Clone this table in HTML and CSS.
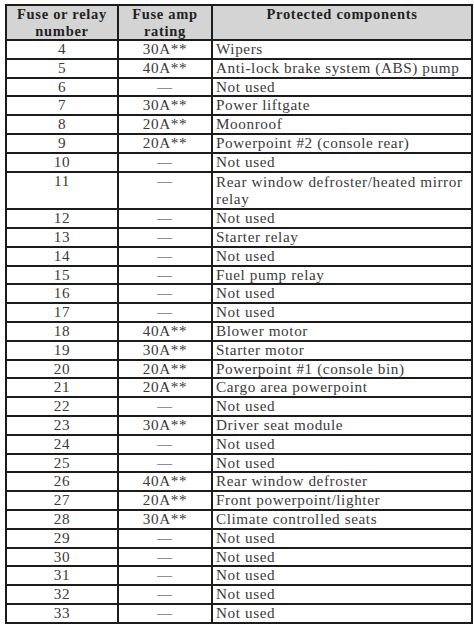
FILE: index.html
```html
<!DOCTYPE html>
<html>
<head>
<meta charset="utf-8">
<link rel="stylesheet" href="styles.css">
</head>
<body>
<table class="fuse">
<colgroup><col class="c1"><col class="c2"><col class="c3"></colgroup>
<thead>
<tr><th>Fuse or relay<br>number</th><th>Fuse amp<br>rating</th><th class="top">Protected components</th></tr>
</thead>
<tbody>
<tr><td>4</td><td>30A**</td><td>Wipers</td></tr>
<tr><td>5</td><td>40A**</td><td>Anti-lock brake system (ABS) pump</td></tr>
<tr><td>6</td><td>—</td><td>Not used</td></tr>
<tr><td>7</td><td>30A**</td><td>Power liftgate</td></tr>
<tr><td>8</td><td>20A**</td><td>Moonroof</td></tr>
<tr><td>9</td><td>20A**</td><td>Powerpoint #2 (console rear)</td></tr>
<tr><td>10</td><td>—</td><td>Not used</td></tr>
<tr class="tall"><td>11</td><td>—</td><td>Rear window defroster/heated mirror<br>relay</td></tr>
<tr><td>12</td><td>—</td><td>Not used</td></tr>
<tr><td>13</td><td>—</td><td>Starter relay</td></tr>
<tr><td>14</td><td>—</td><td>Not used</td></tr>
<tr><td>15</td><td>—</td><td>Fuel pump relay</td></tr>
<tr><td>16</td><td>—</td><td>Not used</td></tr>
<tr><td>17</td><td>—</td><td>Not used</td></tr>
<tr><td>18</td><td>40A**</td><td>Blower motor</td></tr>
<tr><td>19</td><td>30A**</td><td>Starter motor</td></tr>
<tr><td>20</td><td>20A**</td><td>Powerpoint #1 (console bin)</td></tr>
<tr><td>21</td><td>20A**</td><td>Cargo area powerpoint</td></tr>
<tr><td>22</td><td>—</td><td>Not used</td></tr>
<tr><td>23</td><td>30A**</td><td>Driver seat module</td></tr>
<tr><td>24</td><td>—</td><td>Not used</td></tr>
<tr><td>25</td><td>—</td><td>Not used</td></tr>
<tr><td>26</td><td>40A**</td><td>Rear window defroster</td></tr>
<tr><td>27</td><td>20A**</td><td>Front powerpoint/lighter</td></tr>
<tr><td>28</td><td>30A**</td><td>Climate controlled seats</td></tr>
<tr><td>29</td><td>—</td><td>Not used</td></tr>
<tr><td>30</td><td>—</td><td>Not used</td></tr>
<tr><td>31</td><td>—</td><td>Not used</td></tr>
<tr><td>32</td><td>—</td><td>Not used</td></tr>
<tr><td>33</td><td>—</td><td>Not used</td></tr>
</tbody>
</table>
</body>
</html>
```
FILE: styles.css
```css
html, body {
  margin: 0;
  padding: 0;
  background: #ffffff;
}
body {
  padding: 4px 3px 4px 5px;
}
.fuse {
  border-collapse: collapse;
  width: 466px;
  table-layout: fixed;
  font-family: "Liberation Serif", "DejaVu Serif", serif;
  font-size: 15.2px;
  letter-spacing: 0.6px;
  color: #3a3a3a;
  border: 2px solid #1c1c1c;
}
.c1 { width: 112px; }
.c2 { width: 94px; }
.c3 { width: 260px; }
.fuse th, .fuse td {
  border: 2px solid #1c1c1c;
  padding: 0;
  vertical-align: top;
}
.fuse th {
  background: #d4d4d4;
  color: #222222;
  font-weight: bold;
  font-size: 14.5px;
  letter-spacing: 0.7px;
  line-height: 16.5px;
  height: 33px;
  text-align: center;
}
.fuse td {
  line-height: 16.8px;
  height: 16.8px;
  white-space: nowrap;
}
.fuse .tall td {
  height: 35.6px;
}
.fuse .tall td:nth-child(3) {
  line-height: 17.8px;
}
.fuse td:nth-child(1), .fuse td:nth-child(2) {
  text-align: center;
}
.fuse td:nth-child(3) {
  padding-left: 3px;
}
```
